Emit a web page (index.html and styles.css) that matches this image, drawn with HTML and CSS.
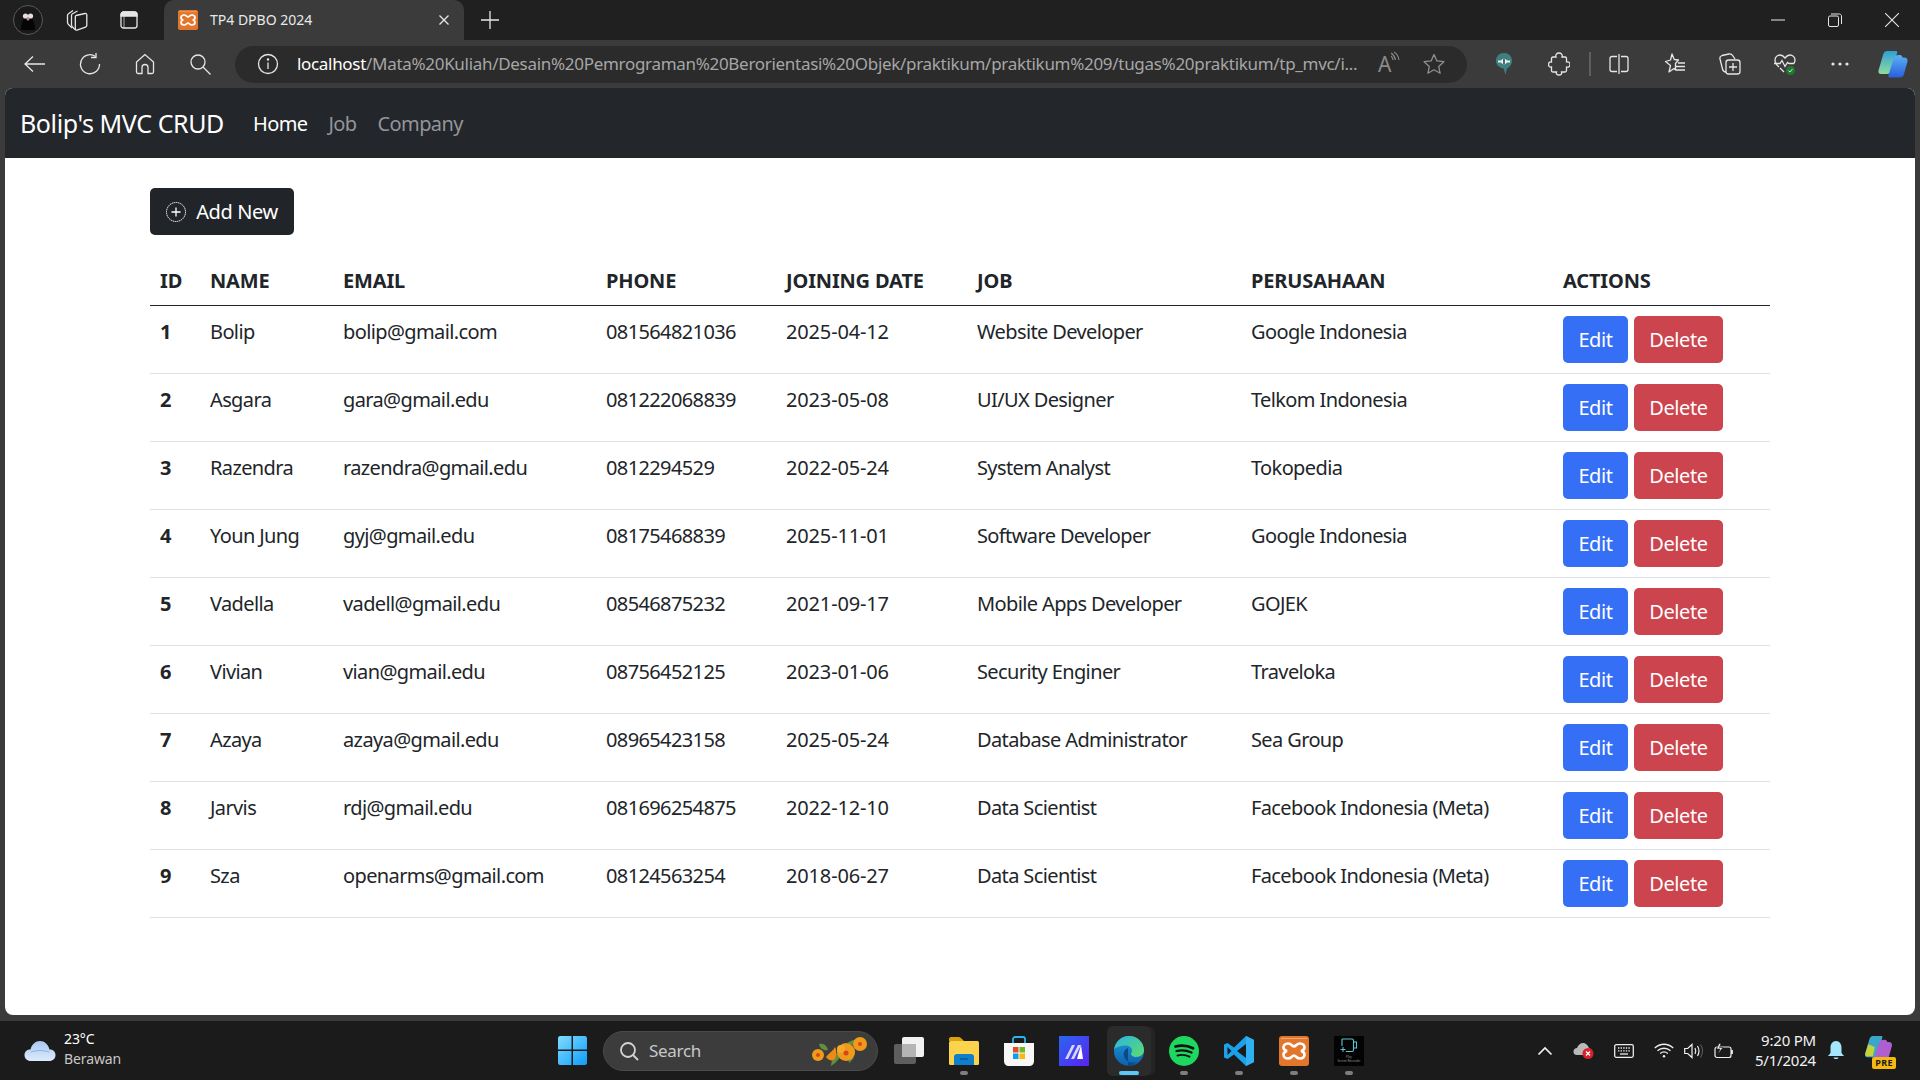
FILE: index.html
```html
<!DOCTYPE html>
<html lang="en">
<head>
    <meta charset="UTF-8" />
    <title>TP4 DPBO 2024</title>
    <link rel="stylesheet" href="styles.css">
</head>
<body>
    <svg class="svg-defs" aria-hidden="true">
        <defs>
            <linearGradient id="cop-a" x1="0" y1="0" x2="0" y2="1">
                <stop offset="0" stop-color="#2f9fd8"/>
                <stop offset="1" stop-color="#8fdc9c"/>
            </linearGradient>
            <linearGradient id="cop-b" x1="0" y1="0" x2="0" y2="1">
                <stop offset="0" stop-color="#5bb0f5"/>
                <stop offset="1" stop-color="#2a5fdc"/>
            </linearGradient>
            <linearGradient id="edge-a" x1="0" y1="0" x2="1" y2="1">
                <stop offset="0" stop-color="#2ab5e0"/>
                <stop offset="1" stop-color="#5fdc6c"/>
            </linearGradient>
            <linearGradient id="edge-b" x1="0" y1="0" x2="0" y2="1">
                <stop offset="0" stop-color="#1b9de2"/>
                <stop offset="1" stop-color="#0f5fa8"/>
            </linearGradient>
            <linearGradient id="win-a" x1="0" y1="0" x2="1" y2="1">
                <stop offset="0" stop-color="#7fdcff"/>
                <stop offset="1" stop-color="#0f9cfb"/>
            </linearGradient>
            <linearGradient id="maze-a" x1="0" y1="0" x2="1" y2="1">
                <stop offset="0" stop-color="#2a66f0"/>
                <stop offset="1" stop-color="#5a22f2"/>
            </linearGradient>
            <linearGradient id="cloud-a" x1="0" y1="0" x2="0" y2="1">
                <stop offset="0" stop-color="#a9c9f2"/>
                <stop offset="1" stop-color="#dcebfb"/>
            </linearGradient>
        </defs>
    </svg>

    <div class="browser">
        <!-- Tab strip -->
        <div class="tabstrip">
            <div class="strip-btn">
                <svg width="30" height="30" viewBox="0 0 30 30">
                    <circle cx="15" cy="15" r="14.5" fill="#191919" stroke="#5a5a5a"/>
                    <path d="M8 25c0-6 2-13 7-13s7 7 7 13z" fill="#050505"/>
                    <circle cx="12.5" cy="11" r="2.6" fill="#e8dcdc"/>
                    <circle cx="17.5" cy="11" r="2.6" fill="#e8dcdc"/>
                    <circle cx="15" cy="14" r="1.5" fill="#b89090"/>
                </svg>
            </div>
            <div class="strip-btn">
                <svg width="22" height="22" viewBox="0 0 22 22" class="line-icon">
                    <path d="M10 6.500l9-2c1-.2 1.800.3 1.800 1.300v10.500c0 1-.5 1.500-1.300 1.800l-8.500 3c-1 .3-1.700-.2-1.700-1.200V8c0-.8.300-1.300.7-1.500z"/>
                    <path d="M9 20.500l-2.500-2.500c-.7-.7-1-1.300-1-2.200V6.500c0-.8.300-1.400 1-1.800L11.500 2"/>
                    <path d="M6 19l-3.500-3.500c-.7-.7-1-1.300-1-2.200V6.500c0-.8.300-1.400 1-1.800L7 1.500"/>
                </svg>
            </div>
            <div class="strip-btn">
                <svg width="20" height="20" viewBox="0 0 20 20" class="line-icon">
                    <rect x="2" y="2" width="16" height="16" rx="2.500"/>
                    <path d="M2 5c0-1.500 1-3 3-3h10c2 0 3 1.500 3 3v1H2z" fill="#e6e6e6"/>
                    <path d="M5 6v12" stroke-width=".7"/>
                </svg>
            </div>
            <div class="tab">
                <svg class="xampp-small" width="20" height="20" viewBox="0 0 30 30">
                    <use href="#xampp-mark"/>
                </svg>
                <span class="tab-title">TP4 DPBO 2024</span>
                <svg class="tab-close" width="12" height="12" viewBox="0 0 12 12" stroke="#e8e8e8" stroke-width="1.300">
                    <path d="M1.500 1.500l9 9M10.500 1.500l-9 9"/>
                </svg>
            </div>
            <div class="new-tab">
                <svg width="18" height="18" viewBox="0 0 18 18" stroke="#e8e8e8" stroke-width="1.300">
                    <path d="M9 0v18M0 9h18"/>
                </svg>
            </div>
            <div class="window-btns">
                <div class="window-btn">
                    <svg width="14" height="14" viewBox="0 0 14 14" stroke="#e8e8e8"><path d="M0 7h14"/></svg>
                </div>
                <div class="window-btn">
                    <svg width="14" height="14" viewBox="0 0 14 14" fill="none" stroke="#e8e8e8">
                        <rect x=".5" y="3" width="10" height="10.500" rx="1.500"/>
                        <path d="M3 1h8.500c1 0 2 1 2 2v8"/>
                    </svg>
                </div>
                <div class="window-btn">
                    <svg width="14" height="14" viewBox="0 0 14 14" stroke="#e8e8e8" stroke-width="1.100"><path d="M0 0l14 14M14 0L0 14"/></svg>
                </div>
            </div>
        </div>

        <!-- Toolbar and address bar -->
        <div class="toolbar">
            <div class="tool-btn">
                <svg width="24" height="24" viewBox="0 0 24 24" class="line-icon"><path d="M22 12H2M10 4.500L2 12l8 7.500"/></svg>
            </div>
            <div class="tool-btn">
                <svg width="24" height="24" viewBox="0 0 24 24" class="line-icon"><path d="M17.500 4.500A9.500 9.500 0 1 0 21.500 12"/><path d="M18 1v4.500h-5"/></svg>
            </div>
            <div class="tool-btn">
                <svg width="24" height="24" viewBox="0 0 24 24" class="line-icon"><path d="M12 2.500L3.500 10v10c0 .8.700 1.500 1.500 1.500h4v-6a3 3 0 0 1 6 0v6h4c.8 0 1.500-.7 1.500-1.500V10z"/></svg>
            </div>
            <div class="tool-btn">
                <svg width="24" height="24" viewBox="0 0 24 24" class="line-icon"><circle cx="10" cy="10" r="7"/><path d="M15 15l7.500 7.500"/></svg>
            </div>
            <div class="address-bar">
                <svg class="info-icon" width="22" height="22" viewBox="0 0 22 22" fill="none" stroke="#e6e6e6" stroke-width="1.300">
                    <circle cx="11" cy="11" r="9.500"/><path d="M11 9.500V16"/><circle cx="11" cy="6.500" r=".6" fill="#e6e6e6"/>
                </svg>
                <span class="url"><span class="url-host">localhost</span>/Mata%20Kuliah/Desain%20Pemrograman%20Berorientasi%20Objek/praktikum/praktikum%209/tugas%20praktikum/tp_mvc/i...</span>
                <div class="read-aloud">
                    <span class="read-a">A</span>
                    <svg width="9" height="16" viewBox="0 0 9 16" fill="none" stroke="#8a8a8a" stroke-width="1.100">
                        <path d="M0 2c2.500 1.500 4 4 4.500 7M0 5c1 1 2 2.500 2 4M3 1c2.500 1.500 4.500 4.500 5 8"/>
                    </svg>
                </div>
                <svg class="addr-star" width="24" height="24" viewBox="0 0 24 24" fill="none" stroke="#8f8f8f" stroke-width="1.300" stroke-linejoin="round">
                    <path d="M12 2.500l2.900 6.400 7 .8-5.200 4.700 1.400 6.900-6.100-3.500-6.100 3.500 1.400-6.900L2.100 9.700l7-.8z"/>
                </svg>
            </div>
            <div class="tool-right">
                <div class="tool-btn">
                    <svg width="18" height="24" viewBox="0 0 18 24">
                        <path d="M9 1c5 0 8 3.500 8 8 0 4-3 6.500-5 7.500l-1.500 6-2-6C4 15.500 1 13 1 9c0-4.500 3-8 8-8z" fill="#3e8080"/>
                        <path d="M3 8.500h12v2H3z" fill="#e8f4f4"/>
                        <circle cx="9" cy="9.500" r="2.800" fill="#e8f4f4"/>
                        <path d="M9 7v5" stroke="#1e3e3e" stroke-width="1.500"/>
                    </svg>
                </div>
                <div class="tool-btn">
                    <svg width="22" height="24" viewBox="0 0 22 24" class="line-icon">
                        <path d="M5 5h3c-.8-2.500.8-4 3-4s3.800 1.500 3 4h3c1 0 1.500.5 1.500 1.500V10c2-.6 3.500.5 3.500 2.500S20.500 15.600 18.500 15v3.500c0 1-.5 1.500-1.500 1.500h-3.500c.7 2-.7 3-2.500 3s-3.200-1-2.500-3H5c-1 0-1.500-.5-1.500-1.500V15c-2 .5-3-1-3-2.500S1.500 9.600 3.500 10V6.500C3.500 5.500 4 5 5 5z"/>
                    </svg>
                </div>
                <div class="tool-divider"></div>
                <div class="tool-btn tool-btn-split">
                    <svg width="20" height="22" viewBox="0 0 20 22" class="line-icon">
                        <path d="M8 3.500H3c-1.200 0-2 .8-2 2v11c0 1.200.8 2 2 2h5M12 3.500h5c1.200 0 2 .8 2 2v11c0 1.200-.8 2-2 2h-5M10 1v20"/>
                    </svg>
                </div>
                <div class="tool-btn">
                    <svg width="22" height="24" viewBox="0 0 22 24" class="line-icon" stroke-linejoin="round">
                        <path d="M8 2l2.300 5.500 4.200.5-3 3.500v6.500l-1.500-1.500-5 3.500 1.500-6.500L1.500 9.500l5-1.500z"/>
                        <path d="M14 11h7M12 14.500h9M12 18h9"/>
                    </svg>
                </div>
                <div class="tool-btn">
                    <svg width="22" height="24" viewBox="0 0 22 24" class="line-icon">
                        <path d="M7 20c-2 0-3-1-3.500-3L1 7c-.5-2 .5-3 2-3.500L10 2c2-.4 3 .5 4 2l2 3"/>
                        <rect x="7" y="8" width="14" height="14" rx="2.500"/>
                        <path d="M14 11v8M10 15h8"/>
                    </svg>
                </div>
                <div class="tool-btn">
                    <svg width="24" height="24" viewBox="0 0 24 24" class="line-icon">
                        <path d="M6 15C3 12.500 2 10.500 2 8c0-3 2.500-5 5-5 2 0 3.500 1 5 3 1.500-2 3-3 5-3 2.500 0 5 2 5 5 0 1.500-.5 2.500-1 3.500"/>
                        <path d="M1 11.500h6l2-3 3 6 2.500-4 1.500 1h5M7 16l4 4"/>
                        <circle cx="17.500" cy="18.500" r="4.500" fill="#1f7a2e" stroke="none"/>
                        <path d="M15.500 18.500l1.500 1.500 2.500-3" stroke="#cfe8cf" stroke-width="1"/>
                    </svg>
                </div>
                <div class="tool-btn">
                    <svg width="18" height="4" viewBox="0 0 18 4" fill="#e6e6e6">
                        <circle cx="2" cy="2" r="1.600"/><circle cx="9" cy="2" r="1.600"/><circle cx="16" cy="2" r="1.600"/>
                    </svg>
                </div>
                <div class="tool-btn tool-btn-copilot">
                    <svg width="30" height="28" viewBox="0 0 30 28">
                        <use href="#copilot-mark"/>
                    </svg>
                </div>
            </div>
        </div>

        <!-- The page itself -->
        <div class="page">
            <nav class="navbar">
                <a class="brand" href="#">Bolip's MVC CRUD</a>
                <a class="nav-link active" href="#">Home</a>
                <a class="nav-link" href="#">Job</a>
                <a class="nav-link" href="#">Company</a>
            </nav>

            <main class="content">
                <button class="btn btn-dark">
                    <svg class="plus-icon" width="20" height="20" viewBox="0 0 20 20" fill="none" stroke="#fff">
                        <circle cx="10" cy="10" r="9.500" stroke-dasharray="1.500 .6"/>
                        <path d="M10 5.500v9M5.500 10h9" stroke-width="1.300"/>
                    </svg>
                    Add New
                </button>

                <table class="data-table">
                    <colgroup>
                        <col class="col-id"><col class="col-name"><col class="col-email"><col class="col-phone">
                        <col class="col-date"><col class="col-job"><col class="col-company"><col class="col-actions">
                    </colgroup>
                    <thead>
                        <tr>
                            <th>ID</th><th>NAME</th><th>EMAIL</th><th>PHONE</th>
                            <th>JOINING DATE</th><th>JOB</th><th>PERUSAHAAN</th><th>ACTIONS</th>
                        </tr>
                    </thead>
                    <tbody>
                        <tr>
                            <th>1</th><td>Bolip</td><td>bolip@gmail.com</td><td>081564821036</td>
                            <td class="cell-date">2025-04-12</td><td>Website Developer</td><td>Google Indonesia</td>
                            <td class="cell-actions"><div class="actions"><a class="btn btn-edit" href="#">Edit</a><a class="btn btn-delete" href="#">Delete</a></div></td>
                        </tr>
                        <tr>
                            <th>2</th><td>Asgara</td><td>gara@gmail.edu</td><td>081222068839</td>
                            <td class="cell-date">2023-05-08</td><td>UI/UX Designer</td><td>Telkom Indonesia</td>
                            <td class="cell-actions"><div class="actions"><a class="btn btn-edit" href="#">Edit</a><a class="btn btn-delete" href="#">Delete</a></div></td>
                        </tr>
                        <tr>
                            <th>3</th><td>Razendra</td><td>razendra@gmail.edu</td><td>0812294529</td>
                            <td class="cell-date">2022-05-24</td><td>System Analyst</td><td>Tokopedia</td>
                            <td class="cell-actions"><div class="actions"><a class="btn btn-edit" href="#">Edit</a><a class="btn btn-delete" href="#">Delete</a></div></td>
                        </tr>
                        <tr>
                            <th>4</th><td>Youn Jung</td><td>gyj@gmail.edu</td><td>08175468839</td>
                            <td class="cell-date">2025-11-01</td><td>Software Developer</td><td>Google Indonesia</td>
                            <td class="cell-actions"><div class="actions"><a class="btn btn-edit" href="#">Edit</a><a class="btn btn-delete" href="#">Delete</a></div></td>
                        </tr>
                        <tr>
                            <th>5</th><td>Vadella</td><td>vadell@gmail.edu</td><td>08546875232</td>
                            <td class="cell-date">2021-09-17</td><td>Mobile Apps Developer</td><td>GOJEK</td>
                            <td class="cell-actions"><div class="actions"><a class="btn btn-edit" href="#">Edit</a><a class="btn btn-delete" href="#">Delete</a></div></td>
                        </tr>
                        <tr>
                            <th>6</th><td>Vivian</td><td>vian@gmail.edu</td><td>08756452125</td>
                            <td class="cell-date">2023-01-06</td><td>Security Enginer</td><td>Traveloka</td>
                            <td class="cell-actions"><div class="actions"><a class="btn btn-edit" href="#">Edit</a><a class="btn btn-delete" href="#">Delete</a></div></td>
                        </tr>
                        <tr>
                            <th>7</th><td>Azaya</td><td>azaya@gmail.edu</td><td>08965423158</td>
                            <td class="cell-date">2025-05-24</td><td>Database Administrator</td><td>Sea Group</td>
                            <td class="cell-actions"><div class="actions"><a class="btn btn-edit" href="#">Edit</a><a class="btn btn-delete" href="#">Delete</a></div></td>
                        </tr>
                        <tr>
                            <th>8</th><td>Jarvis</td><td>rdj@gmail.edu</td><td>081696254875</td>
                            <td class="cell-date">2022-12-10</td><td>Data Scientist</td><td>Facebook Indonesia (Meta)</td>
                            <td class="cell-actions"><div class="actions"><a class="btn btn-edit" href="#">Edit</a><a class="btn btn-delete" href="#">Delete</a></div></td>
                        </tr>
                        <tr>
                            <th>9</th><td>Sza</td><td>openarms@gmail.com</td><td>08124563254</td>
                            <td class="cell-date">2018-06-27</td><td>Data Scientist</td><td>Facebook Indonesia (Meta)</td>
                            <td class="cell-actions"><div class="actions"><a class="btn btn-edit" href="#">Edit</a><a class="btn btn-delete" href="#">Delete</a></div></td>
                        </tr>
                    </tbody>
                </table>
            </main>
        </div>
    </div>

    <!-- Shared marks, used in more than one place -->
    <svg class="svg-defs" aria-hidden="true">
        <defs>
            <symbol id="xampp-mark" viewBox="0 0 30 30">
                <rect width="30" height="30" rx="3" fill="#e2762c"/>
                <path d="M2 2.500h26" stroke="#f0a878" stroke-width="1"/>
                <path d="M9 7.500c-3 0-4.500 2-4.500 4 0 2 1.500 3 3.500 3.500-2 .5-3.500 1.500-3.500 3.500 0 2 1.500 4 4.500 4 3.500 0 4-3 6-3s2.500 3 6 3c3 0 4.500-2 4.500-4 0-2-1.500-3-3.500-3.500 2-.5 3.500-1.500 3.500-3.500 0-2-1.500-4-4.500-4-3.500 0-4 3-6 3s-2.500-3-6-3z" fill="none" stroke="#fff" stroke-width="2.600"/>
            </symbol>
            <symbol id="copilot-mark" viewBox="0 0 30 28">
                <path d="M9 1h9c1.500 0 1.500 1 1 2.500L13 21c-.7 2-2 3-4 3H3c-2 0-3-1.500-2.500-3.500L5 5c.7-2.500 2-4 4-4z" fill="url(#cop-a)"/>
                <path d="M21 5c2 0 3 .5 3.500 2.500h1.500c2.500 0 4 1.500 3.500 4L26 24c-.5 2.500-2 3.500-4.500 3.500H12c-1.500 0-2-1-1.500-2.500l5-16c.7-2.500 2.500-4 5.500-4z" fill="url(#cop-b)"/>
            </symbol>
        </defs>
    </svg>

    <!-- Windows taskbar -->
    <footer class="taskbar">
        <div class="weather">
            <svg width="32" height="22" viewBox="0 0 32 22">
                <path d="M7 21c-4 0-6.500-2.500-6.500-6S3 9.500 6.500 9.500C8 4 11.500 1 16 1s8 3 9.500 8.500c3.500 0 6 2 6 5.500s-2.500 6-6.500 6z" fill="url(#cloud-a)"/>
                <path d="M7 12c5-2 13-2 18 0" fill="none" stroke="#7fa6da" stroke-width=".8"/>
            </svg>
            <div class="weather-text">
                <span class="weather-temp">23°C</span>
                <span class="weather-desc">Berawan</span>
            </div>
        </div>

        <svg class="start-logo" width="29" height="29" viewBox="0 0 29 29" fill="url(#win-a)">
            <path d="M0 2C0 1 1 0 2 0h11.500v13.500H0zM15 0h12c1 0 2 1 2 2v11.500H15zM0 15h13.500v14H2c-1 0-2-1-2-2zM15 15h14v12c0 1-1 2-2 2H15z"/>
        </svg>

        <div class="search-pill">
            <svg width="20" height="20" viewBox="0 0 20 20" fill="none" stroke="#d4d4d4" stroke-width="1.800">
                <circle cx="9" cy="9" r="7"/><path d="M14 14l5 5"/>
            </svg>
            <span class="search-label">Search</span>
            <svg class="search-flowers" width="56" height="32" viewBox="0 0 56 32">
                <path d="M8 9c5-1 8 2 9 6-4 1-8-1-9-6zM36 8c4-3 9-4 13-3-2 4-8 7-13 3zM20 31c5-3 9-7 10-14l-5 2c-3 4-5 8-5 12zM38 28c4-3 6-7 6-13l-5 4c-1 3-2 6-1 9z" fill="#5f8f3f"/>
                <circle cx="7" cy="20" r="6" fill="#f09a1c"/><circle cx="7" cy="20" r="2" fill="#d8451c"/>
                <path d="M15 22c3-4 7-6 9-10 2 4 2 10-1 13-3 1-6 0-8-3z" fill="#ec8a18"/>
                <circle cx="35" cy="17" r="9" fill="#f09a1c"/><circle cx="30" cy="14" r="4" fill="#f5ab2a"/><circle cx="35" cy="18" r="2.500" fill="#d8451c"/>
                <circle cx="49" cy="9" r="7" fill="#f09a1c"/><circle cx="49" cy="9" r="2" fill="#d8451c"/>
            </svg>
        </div>

        <div class="task-apps">
            <div class="task-app">
                <svg width="30" height="30" viewBox="0 0 30 30">
                    <rect x="0" y="8" width="22" height="20" rx="2" fill="#5e5e5e"/>
                    <rect x="8" y="1" width="22" height="20" rx="2" fill="#f2f2f2"/>
                    <rect x="8" y="8" width="14" height="13" fill="#b5b5b5"/>
                </svg>
                <span class="task-dot task-dot-hidden"></span>
            </div>
            <div class="task-app">
                <svg width="30" height="30" viewBox="0 0 30 30">
                    <path d="M0 3c0-1 .6-2 2-2h8c1 0 2 1 3 2l2 2H0z" fill="#d9a20e"/>
                    <rect x="0" y="5" width="30" height="24" rx="1.500" fill="#fcd34d"/>
                    <path d="M5 28v-7c0-2 1-3 3-3h14c2 0 3 1 3 3v8H5z" fill="#0f7ecb"/>
                    <path d="M11 23h8" stroke="#0a4f88" stroke-width="1.200"/>
                </svg>
                <span class="task-dot"></span>
            </div>
            <div class="task-app">
                <svg width="30" height="30" viewBox="0 0 30 30">
                    <path d="M9 7V3c0-1 1-2 2-2h8c1 0 2 1 2 2v4" fill="none" stroke="#2bb3ea" stroke-width="1.800"/>
                    <path d="M0 7h30v18c0 3-2 5-5 5H5c-3 0-5-2-5-5z" fill="#f7f7f7"/>
                    <rect x="9" y="11" width="5.500" height="5.500" fill="#ea4a24"/>
                    <rect x="15.500" y="11" width="5.500" height="5.500" fill="#72b82c"/>
                    <rect x="9" y="17.500" width="5.500" height="5.500" fill="#0ea0e8"/>
                    <rect x="15.500" y="17.500" width="5.500" height="5.500" fill="#fbb80c"/>
                </svg>
                <span class="task-dot task-dot-hidden"></span>
            </div>
            <div class="task-app">
                <svg width="30" height="30" viewBox="0 0 30 30">
                    <rect width="30" height="30" fill="url(#maze-a)"/>
                    <path d="M6 23l7-14h3l-7 14zM12 23l7-14h3l-7 14z" fill="#d6d8fb"/>
                    <path d="M22 9l2 14h-6z" fill="#fff"/>
                </svg>
                <span class="task-dot task-dot-hidden"></span>
            </div>
            <div class="task-app task-app-active">
                <svg width="30" height="30" viewBox="0 0 30 30">
                    <circle cx="15" cy="15" r="15" fill="url(#edge-b)"/>
                    <path d="M0 13C2 5 8 0 15 0c9 0 15 7 15 14 0 4-3 7-8 7-3 0-5-1.500-5-3 0-1 1-1.500 1-3.500 0-3-3-5-6-5-5 0-10 2-12 3.500z" fill="url(#edge-a)"/>
                    <path d="M14 12c-3 1-5 4-4 8 1 5 6 8 13 6-3 2-6 4-9 4" fill="#0c4a86"/>
                </svg>
                <span class="task-dot task-dot-active"></span>
            </div>
            <div class="task-app">
                <svg width="30" height="30" viewBox="0 0 30 30" fill="none" stroke="#111" stroke-linecap="round">
                    <circle cx="15" cy="15" r="15" fill="#1ed760" stroke="none"/>
                    <path d="M6.500 10.500c6-1.500 12-1 17.500 1.800" stroke-width="2.800"/>
                    <path d="M7.500 15c5-1.200 10-.8 15 1.500" stroke-width="2.300"/>
                    <path d="M8.500 19.500c4-1 8.500-.6 12 1.200" stroke-width="1.900"/>
                </svg>
                <span class="task-dot"></span>
            </div>
            <div class="task-app">
                <svg width="30" height="30" viewBox="0 0 30 30">
                    <path d="M22 0l8 4v22l-8 4-12-11.500L3.500 23 0 21.500v-13L3.500 7 10 11.500z" fill="#1ba0ea"/>
                    <path d="M22 0v30l8-4V4z" fill="#2fb0f0"/>
                    <path d="M22 8L13 15l9 7z" fill="#1b1b1b"/>
                    <path d="M3.500 11v8l4-4z" fill="#1b1b1b"/>
                </svg>
                <span class="task-dot"></span>
            </div>
            <div class="task-app">
                <svg width="30" height="30" viewBox="0 0 30 30">
                    <use href="#xampp-mark"/>
                </svg>
                <span class="task-dot"></span>
            </div>
            <div class="task-app">
                <svg width="30" height="30" viewBox="0 0 30 30">
                    <rect width="30" height="30" fill="#030303"/>
                    <path d="M8 3h10c1 0 1.500.5 1.500 1.500V14c0 1-.5 1.500-1.500 1.500h-6M8 3v7M19.500 6h3v6h-3" fill="none" stroke="#5fc4d4" stroke-width="1.100"/>
                    <path d="M9 11v5M6.500 13.500h5" stroke="#5fc4d4" stroke-width="1"/>
                    <text class="recorder-text" x="15" y="22">Play</text>
                    <text class="recorder-text" x="15" y="26">Screen Recorder</text>
                </svg>
                <span class="task-dot"></span>
            </div>
        </div>

        <div class="tray">
            <svg width="16" height="10" viewBox="0 0 16 10" fill="none" stroke="#f0f0f0" stroke-width="1.700"><path d="M1.500 8.500L8 2l6.500 6.500"/></svg>
            <svg class="tray-cloud" width="21" height="17" viewBox="0 0 21 17">
                <path d="M4 13c-2.500 0-3.500-1.500-3.500-3.500S2 6 4 6c1-3 3.500-5 6-5s5 2 6 5c1 .5 2 1 2.500 2L14 13z" fill="#b9b9b9"/>
                <circle cx="15" cy="11.500" r="5.500" fill="#d8202f"/>
                <path d="M13 9.500l4 4M17 9.500l-4 4" stroke="#fff" stroke-width="1.300"/>
            </svg>
            <svg width="20" height="14" viewBox="0 0 20 14" fill="none" stroke="#ececec">
                <rect x=".7" y=".7" width="18.600" height="12.600" rx="1.500" stroke-width="1.300"/>
                <path d="M4 4h12M4 6.800h12" stroke-dasharray="1.400 1.200" stroke-width="1.300"/>
                <path d="M6 10h8" stroke-width="1.300"/>
            </svg>
            <svg width="20" height="15" viewBox="0 0 20 15" fill="none" stroke="#f0f0f0" stroke-width="1.300">
                <path d="M.8 5c5.200-5 13.200-5 18.400 0M3.500 7.800c3.700-3.400 9.300-3.400 13 0M6.200 10.500c2.200-1.800 5.400-1.800 7.600 0"/>
                <circle cx="10" cy="13.300" r="1.200" fill="#f0f0f0" stroke="none"/>
            </svg>
            <svg class="tray-tight" width="20" height="16" viewBox="0 0 20 16" fill="none" stroke="#f0f0f0" stroke-width="1.200">
                <path d="M.7 5.500h3L8 1.500v13l-4.300-4h-3z"/>
                <path d="M11 5c1 2 1 4 0 6M13.500 3c1.800 3 1.800 7 0 10"/>
                <path d="M16.500 1.500c2.500 4 2.500 9 0 13" stroke="#555"/>
            </svg>
            <svg class="tray-tight" width="20" height="16" viewBox="0 0 20 16" fill="none" stroke="#f0f0f0" stroke-width="1.200">
                <rect x="1" y="4" width="16" height="10.500" rx="2"/>
                <path d="M18 7v4" stroke-width="1.800"/>
                <path d="M5 .5L2.500 6H6l-2 5 5-6.500H5.500L7 .5z" fill="#f0f0f0" stroke="#1b1b1b" stroke-width=".6"/>
            </svg>
            <div class="clock">
                <span>9:20 PM</span>
                <span>5/1/2024</span>
            </div>
            <svg class="tray-bell" width="16" height="20" viewBox="0 0 16 20" fill="#a5e6fb">
                <path d="M8 0c3.500 0 5.500 3 5.500 6.500V12l2.500 3H0l2.500-3V6.500C2.500 3 4.500 0 8 0z"/>
                <path d="M5.500 16.500h5c-.3 2-4.700 2-5 0z"/>
            </svg>
            <div class="tray-copilot">
                <svg width="29" height="26" viewBox="0 0 30 28">
                    <path d="M9 1h9c1.500 0 1.500 1 1 2.500L13 21c-.7 2-2 3-4 3H3c-2 0-3-1.500-2.500-3.500L5 5c.7-2.500 2-4 4-4z" fill="#3aa6c9"/>
                    <path d="M21 5c2 0 3 .5 3.500 2.500h1.500c2.500 0 4 1.500 3.500 4L26 24c-.5 2.500-2 3.500-4.500 3.500H12c-1.500 0-2-1-1.500-2.500l5-16c.7-2.500 2.500-4 5.500-4z" fill="#b05fd0"/>
                    <path d="M1 19l3-9 7 3-2 10H3c-2 0-2.500-2-2-4z" fill="#c6d23a"/>
                </svg>
                <span class="pre-badge">PRE</span>
            </div>
        </div>
    </footer>
</body>
</html>
```

FILE: styles.css
```css
/* Basic page reset */
body {
    margin: 0;
    height: 1080px;
    overflow: hidden;
    background-color: #3b3b3b;
    font-family: "Noto Sans", "Open Sans", Arial, sans-serif;
    color: #212529;
}

.svg-defs {
    position: absolute;
    width: 0;
    height: 0;
}

.line-icon {
    fill: none;
    stroke: #e6e6e6;
    stroke-width: 1.300;
}

/* Browser frame */
.browser {
    display: flex;
    flex-direction: column;
    height: 1021px;
}

.tabstrip {
    display: flex;
    align-items: stretch;
    height: 40px;
    padding-left: 4px;
    background-color: #202020;
}

.strip-btn {
    display: flex;
    align-items: center;
    justify-content: center;
    width: 48px;
}

.strip-btn:nth-child(2) { width: 50px; }
.strip-btn:nth-child(3) { width: 54px; }

.tab {
    display: flex;
    align-items: center;
    width: 300px;
    margin-left: 8px;
    padding: 0 14px 0 14px;
    box-sizing: border-box;
    background-color: #3b3b3b;
    border-radius: 10px 10px 0 0;
}

.tab-title {
    margin-left: 12px;
    padding-bottom: 2px;
    font-size: 14px;
    color: #e8e8e8;
}

.tab-close { margin-left: auto; }

.new-tab {
    display: flex;
    align-items: center;
    margin-left: 17px;
}

.window-btns {
    display: flex;
    margin-left: auto;
    margin-right: 0;
}

.window-btn {
    display: flex;
    align-items: center;
    justify-content: center;
    width: 57px;
}

/* Toolbar with the address bar */
.toolbar {
    display: flex;
    align-items: center;
    height: 48px;
    padding-left: 8px;
    background-color: #3b3b3b;
}

.tool-btn {
    display: flex;
    align-items: center;
    justify-content: center;
    width: 55px;
}

.address-bar {
    display: flex;
    align-items: center;
    width: 1233px;
    height: 37px;
    margin-left: 7px;
    padding: 0 19px 0 22px;
    box-sizing: border-box;
    background-color: #2b2b2b;
    border-radius: 19px;
}

.url {
    width: 1062px;
    margin-left: 18px;
    padding-bottom: 2px;
    font-size: 17px;
    white-space: nowrap;
    overflow: hidden;
    letter-spacing: -0.3px;
    color: #a6a6a6;
}

.url-host { color: #fff; }

.read-aloud {
    display: flex;
    align-items: flex-start;
    margin-left: 19px;
}

.read-a {
    font-size: 21px;
    line-height: 26px;
    color: #8a8a8a;
}

.addr-star { margin-left: 22px; }

.tool-right {
    display: flex;
    align-items: center;
    margin-left: 9px;
}

.tool-divider {
    width: 2px;
    height: 24px;
    margin-left: 3px;
    background-color: #5f5f5f;
}

.tool-btn-split { width: 56px; }
.tool-btn-copilot { margin-left: -2px; }

/* Page inside the browser */
.page {
    flex: 1;
    margin: 0 5px 6px;
    background-color: #fff;
    border-radius: 8px;
    overflow: hidden;
}

.navbar {
    display: flex;
    align-items: center;
    height: 70px;
    padding-left: 15px;
    background-color: #23262b;
}

.navbar a { text-decoration: none; }

.brand {
    margin-right: 29px;
    font-size: 25px;
    letter-spacing: -0.4px;
    color: #fff;
}

.nav-link {
    margin-right: 21px;
    font-size: 20px;
    letter-spacing: -0.6px;
    color: #93959a;
}

.nav-link.active { color: #fff; }

.content { padding: 30px 145px 0; }

/* Buttons */
.btn {
    display: inline-flex;
    align-items: center;
    justify-content: center;
    height: 47px;
    box-sizing: border-box;
    border: none;
    border-radius: 5px;
    font-family: inherit;
    font-size: 20px;
    letter-spacing: -0.4px;
    color: #fff;
    text-decoration: none;
}

.btn-dark {
    width: 144px;
    background-color: #212529;
}

.plus-icon { margin-right: 10px; }

.btn-edit {
    width: 65px;
    background-color: #356ff5;
}

.btn-delete {
    width: 89px;
    background-color: #cb444e;
}

.actions {
    display: flex;
    gap: 6px;
}

/* Table */
.data-table {
    width: 1620px;
    margin-top: 26px;
    border-collapse: collapse;
    table-layout: fixed;
    font-size: 20px;
    letter-spacing: -0.62px;
}

.col-id { width: 50px; }
.col-name { width: 133px; }
.col-email { width: 263px; }
.col-phone { width: 180px; }
.col-date { width: 191px; }
.col-job { width: 274px; }
.col-company { width: 312px; }
.col-actions { width: 217px; }

.data-table th,
.data-table td {
    padding: 11px 10px 9px;
    line-height: 30px;
    text-align: left;
    vertical-align: top;
    border-bottom: 1px solid #dee2e6;
    white-space: nowrap;
}

.data-table .cell-actions { padding: 10px; }
.data-table .cell-date { letter-spacing: -0.15px; }

.data-table thead th {
    padding: 5px 10px 9px;
    border-bottom: 1px solid #212529;
    letter-spacing: -0.15px;
}

/* Windows taskbar */
.taskbar {
    display: flex;
    align-items: center;
    height: 59px;
    background-color: #1b1b1b;
}

.weather {
    display: flex;
    align-items: center;
    width: 558px;
    padding-left: 24px;
    box-sizing: border-box;
    flex-shrink: 0;
}

.weather-text {
    display: flex;
    flex-direction: column;
    margin-left: 8px;
    padding-bottom: 3px;
    font-size: 14px;
    line-height: 20px;
    letter-spacing: -0.1px;
}

.weather-temp { color: #fff; }
.weather-desc { color: #c8c8c8; }

.start-logo { flex-shrink: 0; }

.search-pill {
    display: flex;
    align-items: center;
    width: 275px;
    height: 40px;
    margin-left: 16px;
    padding: 0 10px 0 15px;
    box-sizing: border-box;
    background-color: #3c3c3c;
    border: 1px solid #4a4a4a;
    border-radius: 20px;
    flex-shrink: 0;
}

.search-label {
    margin-left: 10px;
    font-size: 17px;
    letter-spacing: -0.3px;
    color: #c8c8c8;
}

.search-flowers { margin-left: auto; }

.task-apps {
    display: flex;
    align-items: center;
    margin-left: 3px;
}

.task-app {
    position: relative;
    display: flex;
    align-items: center;
    justify-content: center;
    width: 55px;
    height: 50px;
}

.task-app-active {
    width: 44px;
    margin: 0 5px 0 6px;
    background-color: #2b2b2b;
    border-radius: 6px;
    box-shadow: 5px 0 0 -1px #242424;
}

/* Running app marker, lies over the bottom of the icon slot */
.task-dot {
    position: absolute;
    left: 50%;
    bottom: 1px;
    width: 8px;
    height: 4px;
    margin-left: -4px;
    background-color: #7e7e7e;
    border-radius: 2px;
}

.task-dot-hidden { display: none; }

.task-dot-active {
    width: 20px;
    margin-left: -10px;
    background-color: #5cc8f8;
}

.recorder-text {
    font-size: 3px;
    fill: #9a9a9a;
    text-anchor: middle;
}

.tray {
    display: flex;
    align-items: center;
    gap: 20px;
    margin-left: auto;
    padding-right: 26px;
}

.tray-tight { margin-left: -10px; }

.clock {
    display: flex;
    flex-direction: column;
    align-items: flex-end;
    width: 62px;
    padding-bottom: 2px;
    font-size: 15px;
    line-height: 20px;
    letter-spacing: -0.2px;
    color: #f2f2f2;
    white-space: nowrap;
}

.tray-bell { margin-left: -8px; }

.tray-copilot {
    position: relative;
    display: flex;
    width: 30px;
    height: 32px;
}

.pre-badge {
    position: absolute;
    right: -2px;
    bottom: -2px;
    padding: 0 3px;
    background-color: #f5b90f;
    border-radius: 2px;
    font-size: 9px;
    font-weight: 700;
    line-height: 12px;
    letter-spacing: 0.4px;
    color: #1b1b1b;
}
```
